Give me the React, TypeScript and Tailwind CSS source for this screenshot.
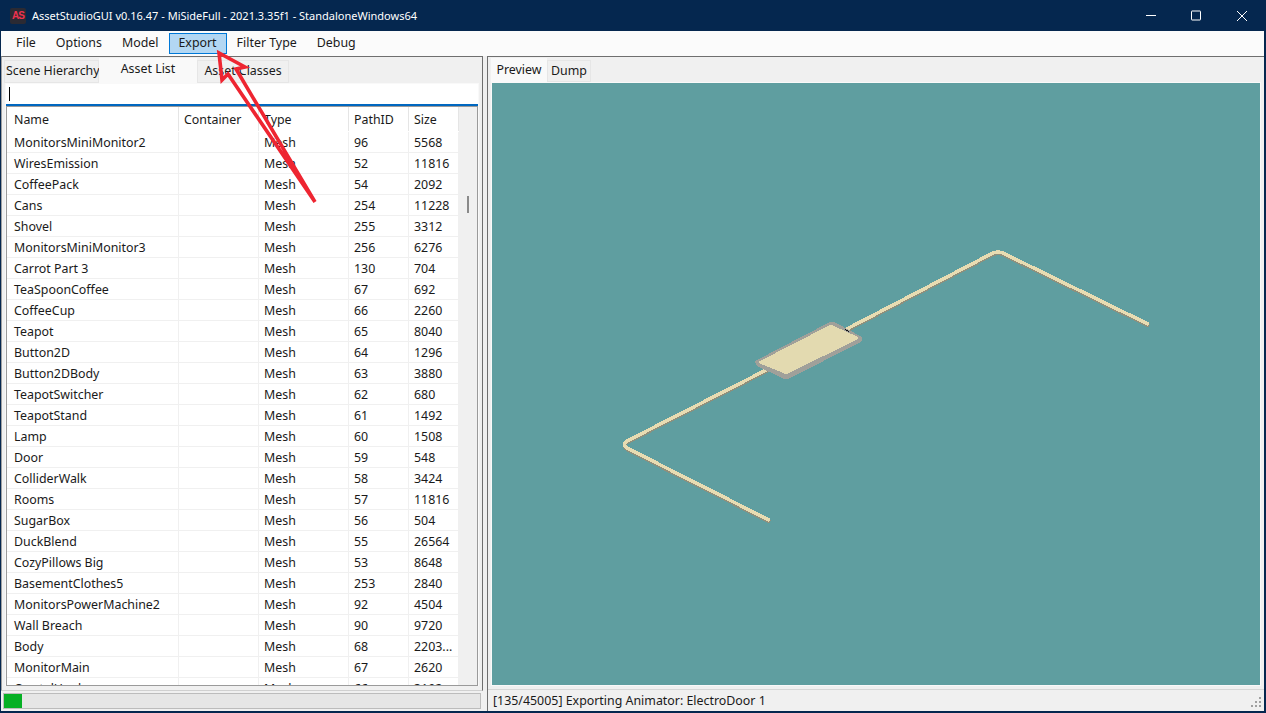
const rows: [string, string, string][] = [
  ["MonitorsMiniMonitor2", "96", "5568"],
  ["WiresEmission", "52", "11816"],
  ["CoffeePack", "54", "2092"],
  ["Cans", "254", "11228"],
  ["Shovel", "255", "3312"],
  ["MonitorsMiniMonitor3", "256", "6276"],
  ["Carrot Part 3", "130", "704"],
  ["TeaSpoonCoffee", "67", "692"],
  ["CoffeeCup", "66", "2260"],
  ["Teapot", "65", "8040"],
  ["Button2D", "64", "1296"],
  ["Button2DBody", "63", "3880"],
  ["TeapotSwitcher", "62", "680"],
  ["TeapotStand", "61", "1492"],
  ["Lamp", "60", "1508"],
  ["Door", "59", "548"],
  ["ColliderWalk", "58", "3424"],
  ["Rooms", "57", "11816"],
  ["SugarBox", "56", "504"],
  ["DuckBlend", "55", "26564"],
  ["CozyPillows Big", "53", "8648"],
  ["BasementClothes5", "253", "2840"],
  ["MonitorsPowerMachine2", "92", "4504"],
  ["Wall Breach", "90", "9720"],
  ["Body", "68", "2203..."],
  ["MonitorMain", "67", "2620"],
  ["CrystalHook", "66", "3192"],
];

const menu = ["File", "Options", "Model", "Export", "Filter Type", "Debug"];

const App = () => {
  return (
    <div className="relative flex h-[713px] w-[1266px] flex-col overflow-hidden bg-[#05274f] pb-[2px] pl-[1px] pr-[2px] font-['Noto_Sans',sans-serif] text-[12.4px] leading-none text-[#1a1a1a]">
      {/* title bar */}
      <div className="flex h-[31px] shrink-0 items-center text-white">
        <div className="ml-[9px] flex h-[16px] w-[16px] items-center justify-center rounded-[2px] bg-[#2b2a33] font-['Liberation_Sans',sans-serif] text-[10px] font-bold tracking-[-1px] text-[#f0324f]">
          AS
        </div>
        <span className="ml-[6px] text-[11px]">AssetStudioGUI v0.16.47 - MiSideFull - 2021.3.35f1 - StandaloneWindows64</span>
        <div className="ml-auto flex items-center">
          <svg width="102" height="12" viewBox="0 0 102 12" className="mr-[16px]" fill="none" stroke="#fff" strokeWidth="1">
            <path d="M0 5.5H10" />
            <rect x="45.5" y="1" width="9" height="9" rx="0.5" />
            <path d="M91 1L101 11M101 1L91 11" />
          </svg>
        </div>
      </div>

      {/* menu */}
      <div className="flex h-[25px] shrink-0 items-center bg-[#fbfbfb] pl-[5px]">
        {menu.map((m) => (
          <div
            key={m}
            className={
              m === "Export"
                ? "ml-[1px] flex h-[21px] items-center border border-[#0078d7] bg-[#b3d7f3] pl-[8px] pr-[9px]"
                : "flex h-[21px] items-center border border-transparent px-[9px]"
            }
          >
            {m}
          </div>
        ))}
      </div>

      <div className="flex min-h-0 flex-1 bg-[#f0f0f0]">
        {/* left */}
        <div className="flex w-[482px] shrink-0 flex-col">
          <div className="flex h-[635px] flex-col border-x border-b border-t border-[#6f6f6f] border-b-[#d0d0d0] border-l-[#a0a0a0]">
            <div className="flex h-[26px] shrink-0 items-start pl-[2px] pt-[1px]">
              <div className="mt-[2px] flex h-[23px] w-[95px] items-center whitespace-nowrap border border-[#e6e6e6] pl-[1px]">Scene Hierarchy</div>
              <div className="flex h-[25px] w-[98px] justify-center bg-[#f9f9f9] pt-[5px]">Asset List</div>
              <div className="mt-[2px] flex h-[23px] w-[92px] items-center justify-center border border-[#e6e6e6]">Asset Classes</div>
            </div>
            <div className="mx-[3px] mb-[4px] flex min-h-0 flex-1 flex-col bg-[#f9f9f9] pl-[1px] pr-[1px] pt-[1px]">
              <div className="flex h-[20px] shrink-0 items-center bg-white pl-[3px]">
                <div className="h-[14px] w-[1px] bg-black" />
              </div>
              <div className="h-[2px] shrink-0 bg-[#0067c0]" />
              <div className="flex min-h-0 flex-1 overflow-hidden border border-[#9a9a9a] bg-white">
                <div className="w-[452px] shrink-0">
                  <div className="flex h-[25px] items-start">
                    <div className="flex h-[24px] w-[172px] items-center border-r border-[#e5e5e5] pl-[7px] pt-[2px]">Name</div>
                    <div className="flex h-[24px] w-[80px] items-center border-r border-[#e5e5e5] pl-[5px] pt-[2px]">Container</div>
                    <div className="flex h-[24px] w-[90px] items-center border-r border-[#e5e5e5] pl-[5px] pt-[2px]">Type</div>
                    <div className="flex h-[24px] w-[60px] items-center border-r border-[#e5e5e5] pl-[5px] pt-[2px]">PathID</div>
                    <div className="flex h-[24px] w-[50px] items-center border-r border-[#e5e5e5] pl-[5px] pt-[2px]">Size</div>
                  </div>
                  {rows.map((r) => (
                    <div key={r[0]} className="flex h-[21px] items-center border-b border-[#f0f0f0]">
                      <div className="flex h-[21px] w-[172px] items-center whitespace-nowrap border-r border-[#f0f0f0] pl-[7px] pt-[2px]">{r[0]}</div>
                      <div className="h-[21px] w-[80px] border-r border-[#f0f0f0]" />
                      <div className="flex h-[21px] w-[90px] items-center border-r border-[#f0f0f0] pl-[5px] pt-[2px]">Mesh</div>
                      <div className="flex h-[21px] w-[60px] items-center border-r border-[#f0f0f0] pl-[5px] pt-[2px]">{r[1]}</div>
                      <div className="flex h-[21px] w-[50px] items-center whitespace-nowrap border-r border-[#f0f0f0] pl-[5px] pt-[2px]">{r[2]}</div>
                    </div>
                  ))}
                </div>
                <div className="relative flex-1 bg-[#f0f0f0]">
                  <div className="absolute left-[8px] top-[89px] h-[17px] w-[2px] bg-[#8a8a8a]" />
                </div>
              </div>
            </div>
          </div>
          <div className="ml-[2px] mr-[2px] mt-[2px] h-[16px] border border-[#bcbcbc] bg-[#e6e6e6]">
            <div className="h-full w-[18px] bg-[#06b025]" />
          </div>
        </div>

        {/* splitter */}
        <div className="w-[4px] shrink-0" />

        {/* right */}
        <div className="flex min-w-0 flex-1 flex-col border-l border-t border-[#6f6f6f]">
          <div className="flex h-[25px] shrink-0 items-start pl-[3px] pt-[1px]">
            <div className="flex h-[24px] w-[56px] justify-center bg-[#f9f9f9] pt-[6px]">Preview</div>
            <div className="mt-[2px] flex h-[22px] w-[44px] items-center justify-center border border-[#e6e6e6]">Dump</div>
          </div>
          <div className="mx-[3px] mb-[3px] h-[604px] shrink-0 border border-[#f9f9f9] bg-[#5f9ea0]">
            <svg viewBox="492 82.5 768 602" className="h-full w-full" shapeRendering="crispEdges">
              <g fill="none" strokeLinejoin="round">
                <path
                  d="M770 521L628 449Q621 445 628 441L775 366M840 333L992 254Q998 251 1004 254L1149 325"
                  stroke="#8f8f7c"
                  strokeWidth="3.4"
                  transform="translate(0 0.6)"
                />
                <path
                  d="M770 520L628 448Q621 444 628 440L775 365M840 332L992 253Q998 250 1004 253L1149 324"
                  stroke="#e8dcb2"
                  strokeWidth="3.5"
                />
              </g>
              <path d="M756 360L829 322Q833 320 837 323L861 336Q864 339 860 342L789 378Q785 380 781 377L758 366Q754 363 756 360Z" fill="#a0a09a" />
              <path d="M759 361L829 325Q832 324 835 326L857 336Q859 338 857 339L788 373Q785 374 782 372L760 363Q758 362 759 361Z" fill="#e3dab0" />
              <path d="M845 329L849 331" stroke="#111" strokeWidth="1" />
            </svg>
          </div>
          <div className="flex h-[22px] shrink-0 items-center justify-between border-t border-[#d7d7d7] pl-[5px] pr-[2px] pt-[2px]">
            <span>[135/45005] Exporting Animator: ElectroDoor 1</span>
            <svg width="12" height="12" viewBox="0 0 12 12" fill="#a0a0a0">
              <rect x="9" y="1" width="2" height="2" />
              <rect x="5" y="5" width="2" height="2" />
              <rect x="9" y="5" width="2" height="2" />
              <rect x="1" y="9" width="2" height="2" />
              <rect x="5" y="9" width="2" height="2" />
              <rect x="9" y="9" width="2" height="2" />
            </svg>
          </div>
        </div>
      </div>

      {/* annotation arrow */}
      <svg className="pointer-events-none absolute left-0 top-0" width="1266" height="713" fill="none">
        <path
          d="M315 202L228 74L222 80L219 53L245 67L236 69Z"
          stroke="#ee2531"
          strokeWidth="3.6"
          strokeLinejoin="miter"
        />
      </svg>
    </div>
  );
};

export default App;
